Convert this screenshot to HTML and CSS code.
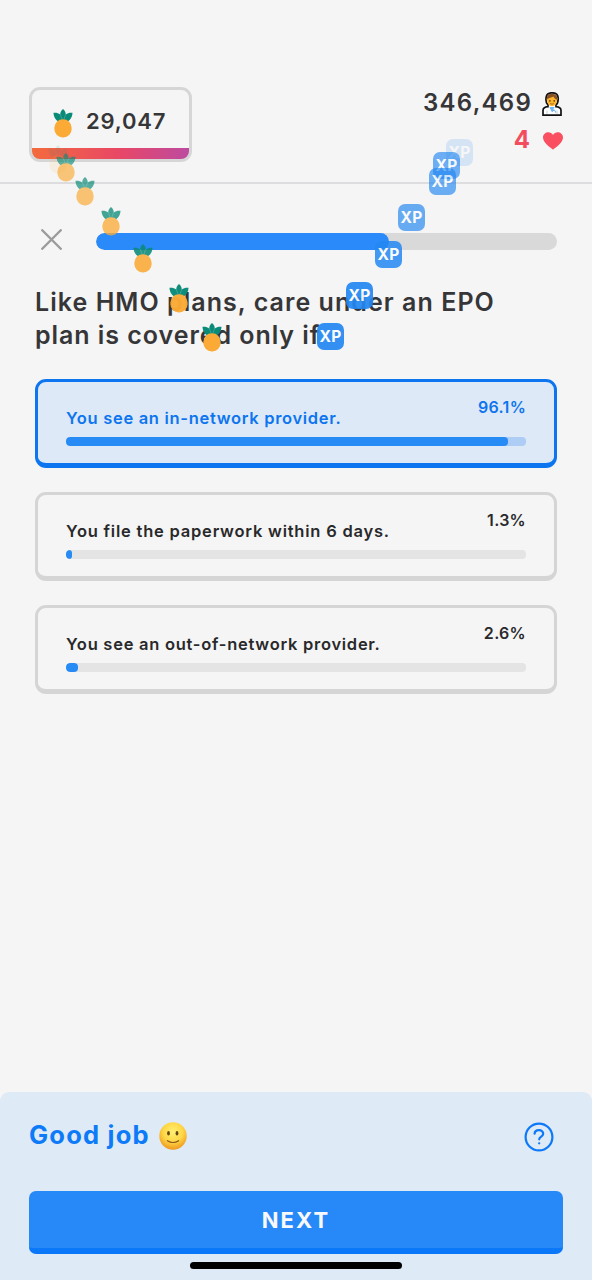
FILE: index.html
```html
<!DOCTYPE html>
<html lang="en">
<head>
<meta charset="utf-8">
<title>Quiz</title>
<link rel="stylesheet" href="styles.css">
</head>
<body>
<svg width="0" height="0" class="defs" aria-hidden="true">
  <symbol id="pineapple" viewBox="0 0 20 29">
    <path fill="#0a8b78" d="M10 0C12 1.7 12.9 3.7 12.7 5.4C14.8 3.8 17.2 3.5 19.5 3.8C19.4 8 17.1 11.9 13 13H7C2.9 11.9.6 8 .5 3.8C2.8 3.5 5.2 3.8 7.3 5.4C7.1 3.7 8 1.7 10 0Z"/>
    <path fill="none" stroke="#f5f5f5" stroke-opacity=".4" stroke-width=".5" d="M7.3 5.4L9 10M12.7 5.4L11 10"/>
    <rect x="1.4" y="10.2" width="17.2" height="18.3" rx="8.3" fill="#fbab35"/>
  </symbol>
</svg>
<main class="screen">
  <header class="header">
    <div class="balance">
      <svg class="fruit"><use href="#pineapple"/></svg>
      <span class="balance-value">29,047</span>
    </div>
    <div class="stats">
      <div class="stat">
        <span class="score">346,469</span>
        <svg class="doctor" viewBox="0 0 20 24">
          <path d="M1 23.2V18.5C1 16 3 15 6 14.7V13C3.5 11 3.8 7 4.3 4.5C5 1.7 7.5.8 10 .8C13.5.8 16 2.5 16.2 6C16.3 9 16 11.5 14 13V14.7C17 15 19 16 19 18.5V23.2Z" fill="#fff" stroke="#111" stroke-width="1.7"/>
          <path d="M5 7C5 11.5 7 14.2 10 14.2C13 14.2 15.1 11.5 15.1 7L13 4H7Z" fill="#ffb52b"/>
          <path d="M4.6 7.6C4.5 3.5 7 1.6 10 1.7C14 1.7 15.8 4.5 15.3 8C13.4 7.4 12 6 11.4 4.6C9.4 5.8 7 6 4.6 7.6Z" fill="#875021"/>
          <path d="M7.4 15L10 20.5L12.6 15Z" fill="#72b6f7"/>
          <path d="M5 18.5V22M15 18.5V22" stroke="#c4cedb" fill="none"/>
          <path d="M10.5 19.5C11 17.5 13.6 17.6 13.4 20.5" stroke="#4598e9" fill="none" stroke-width="1"/>
          <circle cx="7.9" cy="8.9" r=".8" fill="#56340f"/><circle cx="12.2" cy="8.9" r=".8" fill="#56340f"/>
          <path d="M8.2 11.6Q10 12.8 11.8 11.6" stroke="#8b5517" stroke-width=".8" fill="none"/>
        </svg>
      </div>
      <div class="stat lives">
        <span class="life-count">4</span>
        <svg class="heart" viewBox="0 0 20 18"><path fill="#f94f60" d="M10 17.7C8 16 0 11.2 0 5.6C0 .1 7.4-1.6 10 3C12.6-1.6 20 .1 20 5.6C20 11.2 12 16 10 17.7Z"/></svg>
      </div>
    </div>
  </header>

  <section class="quiz">
    <div class="progress-row">
      <svg class="close" viewBox="0 0 20 20"><path d="M1.2 1.2L18.8 18.8M18.8 1.2L1.2 18.8" stroke="#9b9b9b" stroke-width="2.3" stroke-linecap="round"/></svg>
      <div class="progress"><div class="progress-fill"></div></div>
    </div>
    <h1 class="question"><span class="line-one">Like HMO plans, care under an EPO</span><br><span class="line-two">plan is covered only if</span></h1>
    <div class="options">
      <div class="option selected">
        <span class="percent">96.1%</span><span class="label label-a">You see an in-network provider.</span>
        <div class="bar"><div class="bar-fill" style="width:96.1%"></div></div>
      </div>
      <div class="option">
        <span class="percent">1.3%</span><span class="label label-b">You file the paperwork within 6 days.</span>
        <div class="bar"><div class="bar-fill" style="width:1.3%"></div></div>
      </div>
      <div class="option">
        <span class="percent">2.6%</span><span class="label label-c">You see an out-of-network provider.</span>
        <div class="bar"><div class="bar-fill" style="width:2.6%"></div></div>
      </div>
    </div>
  </section>

  <footer class="footer">
    <div class="feedback">
      <span class="praise">Good job</span>
      <svg class="smile" viewBox="0 0 28 28">
        <defs>
          <radialGradient id="face" cx=".5" cy=".35" r=".65"><stop offset="0" stop-color="#fff073"/><stop offset=".55" stop-color="#ffd746"/><stop offset="1" stop-color="#ef981e"/></radialGradient>
        </defs>
        <circle cx="14" cy="14" r="13.7" fill="url(#face)"/>
        <ellipse cx="9.5" cy="11.3" rx="1.4" ry="2.3" fill="#674415"/><ellipse cx="18" cy="11.3" rx="1.4" ry="2.3" fill="#674415"/>
        <path d="M8.4 18.7Q14 22.3 19.6 18.7" stroke="#86551b" stroke-width="1.2" stroke-linecap="round" fill="none"/>
      </svg>
      <svg class="help" viewBox="0 0 30 30" fill="none" stroke="#0d79f8" stroke-width="2.2" stroke-linecap="round" stroke-linejoin="round">
        <circle cx="15" cy="15" r="13.4"/><path d="M10.6 11.7C10.8 7.1 19.2 6.8 19.2 11.8C19.2 14.7 15.2 14.5 15.2 17.3"/><circle cx="15.2" cy="21.3" r=".5" fill="#0d79f8" stroke-width="1.3"/>
      </svg>
    </div>
    <div class="next"><span>NEXT</span></div>
    <div class="home-bar"></div>
  </footer>

  <svg class="particle fruit p1"><use href="#pineapple"/></svg>
  <svg class="particle fruit p2"><use href="#pineapple"/></svg>
  <svg class="particle fruit p3"><use href="#pineapple"/></svg>
  <svg class="particle fruit p4"><use href="#pineapple"/></svg>
  <svg class="particle fruit p5"><use href="#pineapple"/></svg>
  <svg class="particle fruit p6"><use href="#pineapple"/></svg>
  <svg class="particle fruit p7"><use href="#pineapple"/></svg>
  <span class="particle xp x1">XP</span>
  <span class="particle xp x2">XP</span>
  <span class="particle xp x3">XP</span>
  <span class="particle xp x4">XP</span>
  <span class="particle xp x5">XP</span>
  <span class="particle xp x6">XP</span>
  <span class="particle xp x7">XP</span>
</main>
</body>
</html>
```
FILE: styles.css
```css
* { box-sizing: border-box; }
body { margin: 0; background: #f5f5f5; color: #363638; font-family: Inter, "Open Sans", sans-serif; }
.defs { position: absolute; }
.screen { position: relative; display: flex; flex-direction: column; width: 592px; height: 1280px; overflow: hidden; }
svg { display: block; flex: none; }
span { white-space: nowrap; }
.header { height: 184px; padding: 87px 28px 0 29px; display: flex; justify-content: space-between; align-items: flex-start; border-bottom: 2px solid #dddddf; }
.fruit { width: 20px; height: 29px; }
.balance { width: 163px; height: 75px; padding: 0 0 4px 21px; border: 3px solid #d6d6d7; border-radius: 11px; display: flex; align-items: center; gap: 13px; background: linear-gradient(90deg, #f36b3d, #e94765 55%, #bd4aa0) 0 100% / 100% 11px no-repeat; }
.balance .fruit { margin-top: 1px; }
.balance-value { font-size: 22px; line-height: 28px; margin-top: -3px; font-weight: 600; letter-spacing: .8px; }
.stats { display: flex; flex-direction: column; align-items: flex-end; gap: 10px; padding-top: 1px; }
.stat { display: flex; align-items: center; height: 28px; gap: 10px; }
.score { font-size: 24px; font-weight: 600; letter-spacing: 1.25px; }
.doctor { width: 20px; height: 24px; margin-top: 3px; margin-right: 2px; }
.lives { gap: 13px; }
.life-count { color: #f34c5e; font-size: 24px; line-height: 26px; margin-top: -1px; font-weight: 700; }
.heart { width: 20px; height: 18px; margin: 2px 1px 0 0; }
.quiz { flex: 1; padding: 46px 35px 0; }
.progress-row { height: 22px; padding-left: 6px; display: flex; align-items: center; gap: 34px; }
.close { width: 21px; height: 21px; margin-top: -3px; }
.progress { flex: 1; height: 17px; border-radius: 9px; background: #d9d9d9; overflow: hidden; }
.progress-fill { width: 293px; height: 100%; border-radius: 9px; background: #2b8af9; }
.question { margin: 34px 0 0; font-size: 25px; line-height: 33px; font-weight: 600; height: 66px; }
.line-one { letter-spacing: 1.05px; }
.line-two { letter-spacing: .95px; }
.options { display: flex; flex-direction: column; gap: 24px; margin-top: 27px; }
.option { height: 89px; padding: 16px 28px 0; border: 3px solid #d5d5d5; border-bottom-width: 5px; border-radius: 11px; display: flex; flex-direction: column; }
.selected { background: #dde9f6; border-color: #0d75ef; color: #0d75ef; }
.option:not(.selected) { color: #29292b; }
.percent { align-self: flex-end; height: 16px; line-height: 18px; font-size: 16px; font-weight: 600; letter-spacing: .3px; }
.label { align-self: flex-start; height: 16px; line-height: 8px; font-size: 16.5px; font-weight: 600; }
.label-a { letter-spacing: .69px; }
.label-b { letter-spacing: .78px; }
.label-c { letter-spacing: .73px; }
.bar { width: 460px; height: 9px; border-radius: 4px; background: #e4e4e4; margin-top: 7px; overflow: hidden; }
.selected .bar { background: #adcdf5; }
.bar-fill { height: 100%; border-radius: 4px; background: #278bf6; }
.footer { height: 188px; padding: 25px 29px 0; background: #deeaf6; border-radius: 9px 9px 0 0; display: flex; flex-direction: column; }
.feedback { height: 38px; display: flex; align-items: center; }
.praise { color: #0d7bf8; font-size: 25.5px; line-height: 32px; margin-top: -2px; font-weight: 700; letter-spacing: 1.2px; }
.smile { width: 28px; height: 28px; margin: -1px 0 0 9px; }
.help { width: 30px; height: 30px; margin: 1px 9px 0 auto; }
.next { height: 63px; margin-top: 36px; flex: none; border-radius: 7px; border-bottom: 6px solid #0b78fa; background: #2788f7; color: #f7f9fc; display: flex; align-items: center; justify-content: center; font-size: 22px; line-height: 28px; padding-top: 1px; font-weight: 700; letter-spacing: 2.1px; }
.home-bar { width: 212px; height: 7px; border-radius: 4px; background: #000; margin: 8px auto 0; }
.particle { position: absolute; }
.p1 { left: 48px; top: 145px; opacity: .1; }
.p2 { left: 56px; top: 153px; opacity: .65; }
.p3 { left: 75px; top: 177px; opacity: .68; }
.p4 { left: 101px; top: 207px; opacity: .76; }
.p5 { left: 133px; top: 244px; opacity: .88; }
.p6 { left: 169px; top: 284px; opacity: .97; }
.p7 { left: 202px; top: 323px; }
.xp { width: 27px; height: 27px; border-radius: 7px; background: #2388f2; color: #fff; font-size: 15.5px; line-height: 27px; font-weight: 700; text-align: center; letter-spacing: .3px; }
.x1 { left: 446px; top: 139px; opacity: .15; }
.x2 { left: 433px; top: 152px; opacity: .65; }
.x3 { left: 429px; top: 168px; opacity: .66; }
.x4 { left: 398px; top: 204px; opacity: .68; }
.x5 { left: 375px; top: 241px; opacity: .85; }
.x6 { left: 346px; top: 282px; opacity: .92; }
.x7 { left: 317px; top: 323px; opacity: .92; }
```
